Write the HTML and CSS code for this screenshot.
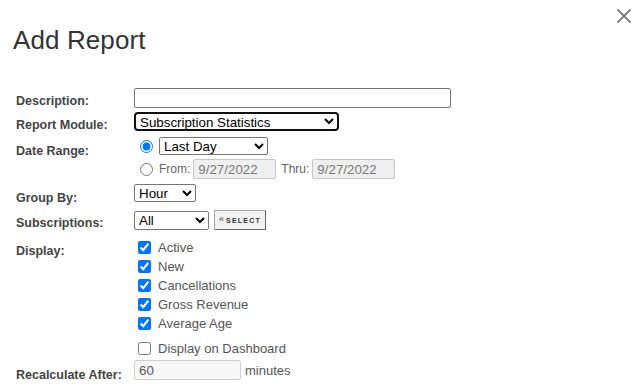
FILE: index.html
```html
<!DOCTYPE html>
<html>
<head>
<meta charset="utf-8">
<link rel="stylesheet" href="styles.css">
</head>
<body>
<div class="dialog">
  <button class="close" aria-label="Close">
    <svg width="16" height="16" viewBox="0 0 16 16"><path d="M1.5 1.5 L14.5 14.5 M14.5 1.5 L1.5 14.5" stroke="#7a7f87" stroke-width="1.8" fill="none"/></svg>
  </button>
  <h1 class="title">Add Report</h1>
  <form class="form">
    <div class="row r-desc">
      <label class="lbl">Description:</label>
      <div class="ctl"><input type="text" class="txt desc"></div>
    </div>
    <div class="row r-module">
      <label class="lbl">Report Module:</label>
      <div class="ctl"><select class="sel module focused"><option>Subscription Statistics</option></select></div>
    </div>
    <div class="row r-date">
      <label class="lbl">Date Range:</label>
      <div class="ctl stack">
        <div class="line"><input type="radio" name="dr" checked class="radio"><select class="sel lastday"><option>Last Day</option></select></div>
        <div class="line line2"><input type="radio" name="dr" class="radio"><span class="small">From:</span><input type="text" class="txt date" value="9/27/2022" disabled><span class="small thru">Thru:</span><input type="text" class="txt date" value="9/27/2022" disabled></div>
      </div>
    </div>
    <div class="row r-group">
      <label class="lbl">Group By:</label>
      <div class="ctl"><select class="sel group"><option>Hour</option></select></div>
    </div>
    <div class="row r-subs">
      <label class="lbl">Subscriptions:</label>
      <div class="ctl"><select class="sel subs"><option>All</option></select><button type="button" class="selbtn"><span class="chev">&laquo;</span>SELECT</button></div>
    </div>
    <div class="row r-display">
      <label class="lbl">Display:</label>
      <div class="ctl stack checks">
        <label class="chk"><input type="checkbox" checked>Active</label>
        <label class="chk"><input type="checkbox" checked>New</label>
        <label class="chk"><input type="checkbox" checked>Cancellations</label>
        <label class="chk"><input type="checkbox" checked>Gross Revenue</label>
        <label class="chk"><input type="checkbox" checked>Average Age</label>
        <label class="chk dash"><input type="checkbox">Display on Dashboard</label>
      </div>
    </div>
    <div class="row r-recalc">
      <label class="lbl">Recalculate After:</label>
      <div class="ctl"><input type="text" class="txt recalc" value="60"><span class="small mins">minutes</span></div>
    </div>
  </form>
</div>
</body>
</html>
```

FILE: styles.css
```css
* { box-sizing: border-box; }
html, body { margin: 0; padding: 0; background: #fff; }
body { font-family: "Liberation Sans", Arial, sans-serif; color: #333; }
.dialog { position: relative; width: 643px; height: 388px; overflow: hidden; padding: 0 0 0 16px; }
.close { position: absolute; top: 8px; left: 616px; width: 17px; height: 17px; padding: 0; border: 0; background: none; display: flex; }
.title { margin: 25px 0 0 -3px; font-size: 26px; line-height: 30px; font-weight: normal; color: #333; letter-spacing: 0.1px; }
.form { margin-top: 33px; display: flex; flex-direction: column; }
.row { display: grid; grid-template-columns: 118px 1fr; align-items: start; }
.lbl { font-size: 12.5px; font-weight: bold; color: #444; line-height: 14px; padding-top: 6px; }
.ctl { display: flex; align-items: center; }
.stack { flex-direction: column; align-items: flex-start; }
.line { display: flex; align-items: center; height: 18px; }
.line2 { margin-top: 4px; height: 20px; }
.txt { font-family: "Liberation Sans", Arial, sans-serif; font-size: 13.33px; height: 20px; border: 1px solid #767676; border-radius: 2px; padding: 1px 4px; margin: 0; color: #222; background: #fff; }
.desc { width: 317px; }
.sel { font-family: "Liberation Sans", Arial, sans-serif; font-size: 13.33px; height: 19px; border: 1px solid #767676; border-radius: 2px; margin: 0; padding: 0; color: #000; background: #fff; }
.focused { border: 2px solid #101010; border-radius: 4px; padding-left: 0; }
.r-module { margin-top: 4px; }
.module { width: 205px; }
.r-date { margin-top: 5px; }
.r-date .lbl { padding-top: 7px; }
.radio { margin: 0 6px 0 6px; width: 13px; height: 13px; }
.lastday { width: 109px; height: 18px; }
.small { font-size: 12px; color: #666; }
.date { width: 83px; background: #efefef; border-color: #c6c6c6; color: #777; font-size: 13.33px; padding: 1px 4px; }
.line2 .small { margin-right: 3px; }
.line2 .date:first-of-type { margin-left: 1px; }
.thru { margin-left: 5px; }
.r-group { margin-top: 5px; }
.r-group .lbl { padding-top: 7px; }
.group { width: 62px; height: 18px; }
.r-subs { margin-top: 5px; }
.subs { width: 75px; }
.selbtn { margin-left: 5px; height: 20px; width: 52px; padding: 0; display: flex; align-items: center; justify-content: center; font-family: "Liberation Sans", Arial, sans-serif; font-size: 7px; font-weight: bold; letter-spacing: 1.2px; color: #333; background: #f0f0f0; border: 1px solid #aaa; border-right-color: #666; border-bottom-color: #666; border-radius: 1px; }
.chev { font-size: 9px; font-weight: normal; margin-right: 2px; letter-spacing: 0; position: relative; top: -1px; }
.r-display { margin-top: 8px; }
.r-display .lbl { padding-top: 6px; }
.chk { display: flex; align-items: center; height: 19px; font-size: 13px; color: #555; }
.chk input { margin: 0 7px 0 4px; width: 13px; height: 13px; }
.dash { margin-top: 6px; }
.r-recalc { margin-top: 2px; }
.r-recalc .lbl { padding-top: 8px; }
.recalc { width: 107px; background: #f7f7f7; border-color: #d0d0d0; color: #555; }
.mins { margin-left: 4px; font-size: 13px; color: #555; }
```
